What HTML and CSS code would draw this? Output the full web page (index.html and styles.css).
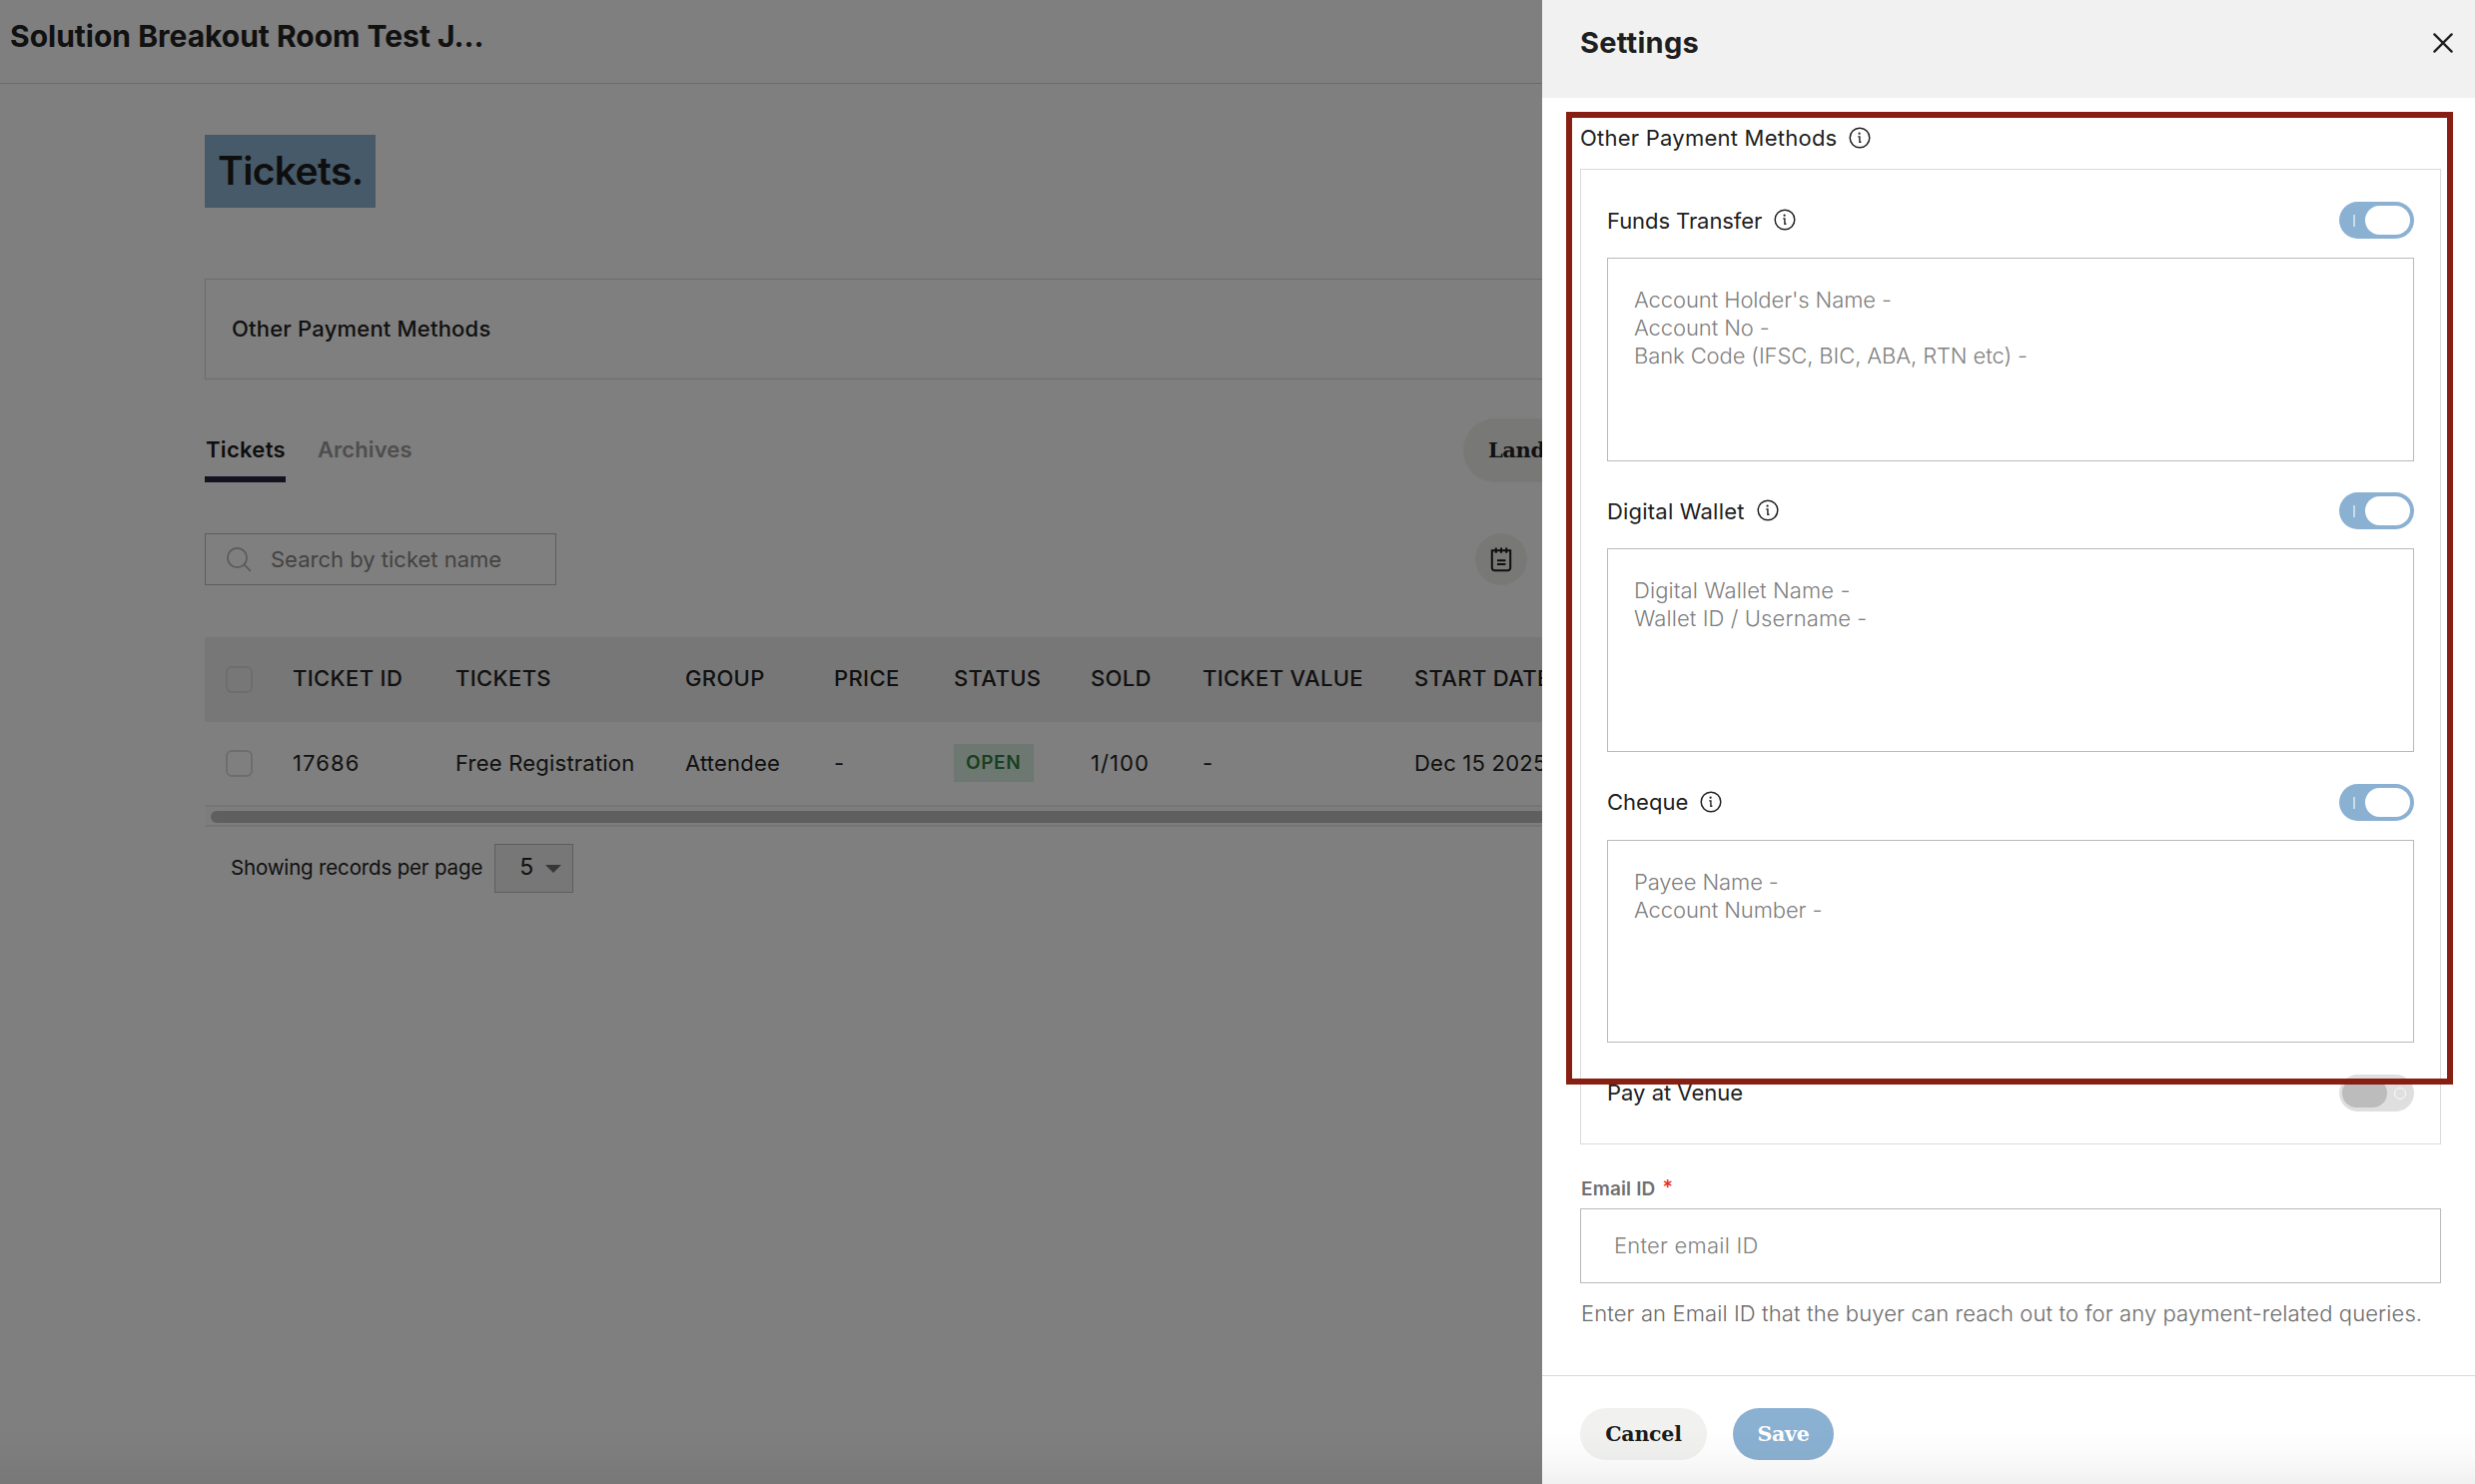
FILE: index.html
```
<!DOCTYPE html>
<html lang="en">
<head>
<meta charset="utf-8">
<title>Tickets</title>
<link rel="stylesheet" href="styles.css">
</head>
<body>
<svg class="defs" aria-hidden="true">
  <symbol id="info" viewBox="0 0 22 22">
    <circle cx="11" cy="11" r="9.8" fill="none" stroke="currentColor" stroke-width="1.5"/>
    <circle cx="10.6" cy="6.7" r="1.1" fill="currentColor"/>
    <path d="M9.2 9.9h1.7v5.4h1.5" fill="none" stroke="currentColor" stroke-width="1.4"/>
  </symbol>
</svg>

<div class="page">
  <header class="topbar"><h1>Solution Breakout Room Test J...</h1></header>
  <main class="content">
    <h2 class="page-title">Tickets.</h2>
    <section class="card">Other Payment Methods</section>

    <div class="tabs-row">
      <nav class="tabs">
        <a class="tab active">Tickets</a>
        <a class="tab">Archives</a>
      </nav>
      <a class="btn-landing">Landing Page</a>
    </div>

    <div class="tools-row">
      <div class="search">
        <svg width="26" height="26" viewBox="0 0 26 26" fill="none" stroke="#b4b4b4" stroke-width="1.7" stroke-linecap="round"><circle cx="11.5" cy="11.5" r="9.6"/><path d="M18.4 18.4l6 6"/></svg>
        <span>Search by ticket name</span>
      </div>
      <div class="note-btn">
        <svg width="24" height="26" viewBox="0 0 24 26" fill="none" stroke="#1c1c1c" stroke-width="2"><path d="M2.8 4.2h18.4v17.3a2.8 2.8 0 0 1-2.8 2.8H5.6a2.8 2.8 0 0 1-2.8-2.8z"/><path d="M6.8 1.4v5.4M12 1.4v5.4M17.2 1.4v5.4M8 14.2h8.4M8 18h8.4"/></svg>
      </div>
    </div>

    <div class="table">
      <div class="row head">
        <i class="check"></i><span>TICKET ID</span><span>TICKETS</span><span>GROUP</span><span>PRICE</span><span>STATUS</span><span>SOLD</span><span>TICKET VALUE</span><span>START DATE</span>
      </div>
      <div class="row body">
        <i class="check"></i><span class="num">17686</span><span>Free Registration</span><span>Attendee</span><span>-</span><span><b class="badge">OPEN</b></span><span class="num">1/100</span><span>-</span><span>Dec 15 2025</span>
      </div>
      <div class="scroll"><div class="thumb"></div></div>
    </div>

    <div class="pager">
      <span>Showing records per page</span>
      <div class="select"><span>5</span><i class="caret"></i></div>
    </div>
  </main>
</div>

<div class="overlay"></div>

<aside class="drawer">
  <header class="drawer-head">
    <h3>Settings</h3>
    <svg width="20" height="20" viewBox="0 0 20 20" stroke="#1f1f1f" stroke-width="2.3" stroke-linecap="round"><path d="M1.4 1.4l17.2 17.2M18.6 1.4L1.4 18.6"/></svg>
  </header>

  <div class="drawer-body">
    <div class="label top">Other Payment Methods <svg class="info"><use href="#info"/></svg></div>
    <div class="methods">
      <div class="method">
        <div class="method-head"><div class="label funds">Funds Transfer <svg class="info"><use href="#info"/></svg></div><div class="toggle on"><i class="bar"></i><i class="knob"></i></div></div>
        <div class="area">Account Holder's Name -<br>Account No -<br>Bank Code (IFSC, BIC, ABA, RTN etc) -</div>
      </div>
      <div class="method">
        <div class="method-head"><div class="label wallet">Digital Wallet <svg class="info"><use href="#info"/></svg></div><div class="toggle on"><i class="bar"></i><i class="knob"></i></div></div>
        <div class="area wide">Digital Wallet Name -<br>Wallet ID / Username -</div>
      </div>
      <div class="method">
        <div class="method-head"><div class="label">Cheque <svg class="info"><use href="#info"/></svg></div><div class="toggle on"><i class="bar"></i><i class="knob"></i></div></div>
        <div class="area">Payee Name -<br>Account Number -</div>
      </div>
      <div class="method-head"><div class="label venue">Pay at Venue</div><div class="toggle off"><i class="knob"></i><i class="ring"></i></div></div>
    </div>

    <div class="email-label"><span>Email ID</span><sup>*</sup></div>
    <div class="email-input">Enter email ID</div>
    <p class="help">Enter an Email ID that the buyer can reach out to for any payment-related queries.</p>
  </div>

  <footer class="drawer-foot">
    <a class="btn cancel">Cancel</a>
    <a class="btn save">Save</a>
  </footer>
  <div class="highlight"></div>
</aside>
<div class="bottom-fade"></div>
</body>
</html>
```
FILE: styles.css
```
* { box-sizing: border-box; }
html, body { margin: 0; height: 100%; overflow: hidden; }
body {
  background: #fff;
  color: #222;
  font: 400 22px/28px Inter, "Liberation Sans", sans-serif;
  white-space: nowrap;
}
h1, h2, h3, p { margin: 0; }
i { font-style: normal; display: block; }
.defs { position: absolute; width: 0; height: 0; }

/* Page behind the drawer */
.page { width: 2478px; height: 1486px; overflow: hidden; }
.topbar { height: 84px; padding: 18px 0 0 10px; border-bottom: 1px solid #d6d6d6; }
.topbar h1 { font-size: 30px; line-height: 36px; font-weight: 700; }
.content { padding: 51px 205px 0; }
.page-title {
  width: 171px; height: 73px; padding-left: 13px;
  background: #8fb4d3;
  font-size: 39px; line-height: 71px; font-weight: 600; letter-spacing: -.6px;
  color: #1c1c1c;
}
.card {
  margin-top: 71px; height: 101px; padding-left: 26px;
  border: 1px solid #d8d8d8;
  line-height: 99px; font-weight: 500; letter-spacing: .2px;
}
.tabs-row { display: flex; justify-content: space-between; margin-top: 39px; height: 64px; }
.tabs { display: flex; gap: 32px; }
.tab { height: 64px; line-height: 62px; font-weight: 600; letter-spacing: .1px; color: #9c9c9c; }
.tab.active { padding-left: 1px; color: #1c1c1c; border-bottom: 6px solid #282342; letter-spacing: .3px; }
.btn-landing {
  width: 808px; padding-left: 25px; border-radius: 32px;
  background: #f1f1ec;
  font: 700 21px/63px "DejaVu Serif", serif; letter-spacing: -.4px;
}
.tools-row { display: flex; align-items: center; margin-top: 51px; height: 52px; }
.search {
  display: flex; align-items: center; gap: 19px;
  width: 352px; height: 52px; padding-left: 20px;
  border: 1px solid #bababa; color: #868686;
}
.note-btn {
  display: flex; align-items: center; justify-content: center;
  width: 52px; height: 52px; margin-left: 920px; border-radius: 50%;
  background: #f1f1ec;
}
.table { margin-top: 52px; }
.row {
  display: grid; align-items: center;
  grid-template-columns: 88px 163px 230px 149px 120px 137px 112px 212px 1fr;
  height: 83px; letter-spacing: .22px;
}
.row.head { height: 85px; background: #efefef; font-weight: 500; letter-spacing: .35px; }
.row.head span { padding-bottom: 3px; }
.row.body span { padding-bottom: 2px; }
.check { width: 27px; height: 27px; margin-left: 21px; border: 2px solid #dbdbdb; border-radius: 6px; }
.num { letter-spacing: 1.1px; }
.badge {
  display: inline-block; width: 80px; height: 38px; padding-left: 12px;
  background: #daf1e4; color: #338040;
  font-size: 19px; line-height: 37px; font-weight: 600; letter-spacing: .6px;
  vertical-align: middle;
}
.scroll { height: 22px; padding: 4px 0 0 6px; border: solid #ebebeb; border-width: 2px 0; background: #fafafa; }
.thumb { height: 12px; border-radius: 6px; background: #bfbfbf; }
.pager { display: flex; align-items: center; gap: 12px; margin: 17px 0 0 26px; font-size: 20.5px; letter-spacing: -.16px; }
.pager > span { padding-bottom: 2px; }
.select {
  display: flex; align-items: center; gap: 12px;
  width: 79px; height: 49px; padding: 0 0 4px 24px;
  border: 1px solid #bababa; background: #efefef; font-size: 23px;
}
.caret { margin-top: 5px; border: 8px solid transparent; border-top: 8px solid #6f6f6f; border-bottom: 0; }

.overlay { position: fixed; inset: 0; background: rgba(0, 0, 0, .5); }

/* Settings drawer */
.drawer {
  position: fixed; top: 0; right: 0; bottom: 0; width: 934px;
  display: flex; flex-direction: column; background: #fff;
}
.drawer-head {
  display: flex; justify-content: space-between; flex: none;
  height: 98px; padding: 26px 22px 0 38px; background: #f1f1f1;
}
.drawer-head h3 { font-size: 29px; line-height: 34px; font-weight: 700; letter-spacing: .25px; color: #1f1f1f; }
.drawer-head svg { margin-top: 7px; }
.drawer-body { flex: 1; padding: 26px 34px 0 38px; }
.label { display: flex; align-items: center; gap: 12px; height: 28px; }
.label.top { letter-spacing: .24px; }
.label.funds { letter-spacing: -.08px; }
.label.wallet { letter-spacing: .2px; }
.label.venue { padding-bottom: 2px; }
.info { width: 22px; height: 22px; margin-top: -1px; }
.methods { height: 977px; margin-top: 17px; padding: 32px 26px 0; border: 1px solid #dadada; }
.method { height: 291.4px; }
.method-head { display: flex; justify-content: space-between; align-items: center; height: 37px; }
.toggle { display: flex; align-items: center; width: 75px; height: 37px; border-radius: 19px; }
.toggle.on { padding-left: 14px; gap: 10px; background: #8bb1d2; }
.toggle.off { padding-left: 3px; gap: 7px; background: #dfdfdf; }
.bar { width: 2px; height: 12px; margin-top: 1px; background: #c9dcea; }
.knob { width: 45px; height: 29px; border-radius: 15px; background: #fff; }
.off .knob { background: #bcbcbc; }
.ring { width: 12px; height: 12px; border: 1px solid #fafafa; border-radius: 50%; }
.area {
  height: 203.5px; margin-top: 19px; padding: 27px 26px 0;
  border: 1px solid #b9b9b9; color: #808080;
  font-weight: 350; letter-spacing: -.1px;
}
.area.wide { letter-spacing: .1px; }
.email-label { display: flex; margin-top: 31px; height: 33px; padding-left: 1px; font-size: 19px; font-weight: 600; letter-spacing: .15px; line-height: 28px; color: #717171; }
.email-label sup { margin-left: 7px; font-size: 20px; line-height: 24px; font-weight: 500; color: #e8301c; }
.email-input {
  height: 75px; padding-left: 33px; border: 1px solid #b9b9b9;
  line-height: 73px; font-weight: 350; letter-spacing: .22px; color: #828282;
}
.help { margin-top: 16px; padding-left: 1px; font-weight: 350; letter-spacing: .11px; color: #6c6c6c; }
.drawer-foot { display: flex; gap: 26px; flex: none; height: 109px; padding: 32px 38px 0; border-top: 1px solid #d9d9d9; }
.btn { height: 52px; border-radius: 26px; text-align: center; font: 700 20.5px/53px "DejaVu Serif", serif; }
.cancel { width: 127px; background: #f1f1f0; color: #1d1d1d; letter-spacing: -.2px; }
.save { width: 101px; background: #8bb1d2; color: #fff; letter-spacing: -.3px; }

.highlight { position: absolute; left: 23.5px; top: 112px; width: 888.5px; height: 974px; border: 6px solid #871f12; }
.bottom-fade { position: fixed; left: 0; right: 0; bottom: 0; height: 56px; background: linear-gradient(rgba(0,0,0,0), rgba(0,0,0,.015) 45%, rgba(0,0,0,.055)); }
```
